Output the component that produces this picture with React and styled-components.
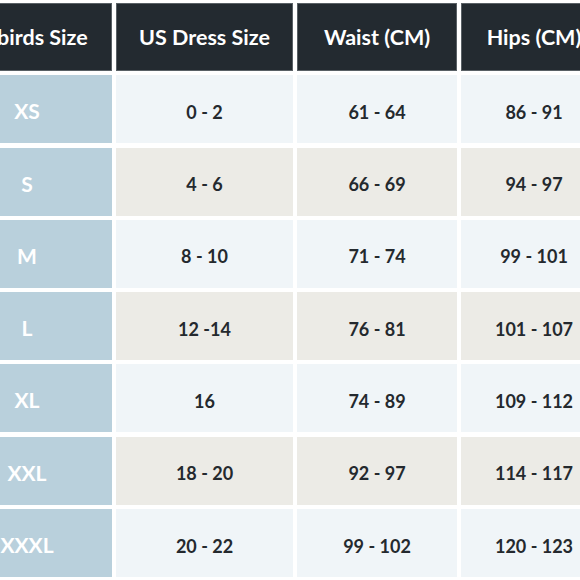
import React from "react";
import styled, { createGlobalStyle } from "styled-components";

const GlobalStyle = createGlobalStyle`
  html, body {
    margin: 0;
    padding: 0;
    background: #ffffff;
    overflow: hidden;
  }
  body {
    font-family: Lato, "Noto Sans", "Liberation Sans", sans-serif;
  }
`;

const HEADERS = ["Jaybirds Size", "US Dress Size", "Waist (CM)", "Hips (CM)"];

const ROWS = [
  ["XS", "0 - 2", "61 - 64", "86 - 91"],
  ["S", "4 - 6", "66 - 69", "94 - 97"],
  ["M", "8 - 10", "71 - 74", "99 - 101"],
  ["L", "12 -14", "76 - 81", "101 - 107"],
  ["XL", "16", "74 - 89", "109 - 112"],
  ["XXL", "18 - 20", "92 - 97", "114 - 117"],
  ["XXXL", "20 - 22", "99 - 102", "120 - 123"],
];

const App = () => {
  return (
    <>
      <GlobalStyle />
      <Viewport>
        <Table>
          {HEADERS.map((h) => (
            <HeadCell key={h}>{h}</HeadCell>
          ))}
          {ROWS.map((row, i) =>
            row.map((value, j) =>
              j === 0 ? (
                <SizeCell key={`${i}-${j}`}>{value}</SizeCell>
              ) : (
                <DataCell key={`${i}-${j}`} $shaded={i % 2 === 1}>
                  {value}
                </DataCell>
              )
            )
          )}
        </Table>
      </Viewport>
    </>
  );
};
export default App;

const Viewport = styled.div`
  width: 580px;
  height: 580px;
  overflow: hidden;
  padding-top: 3px;
  box-sizing: border-box;
`;
const Table = styled.div`
  display: grid;
  grid-template-columns: 170px 177px 160px 146px;
  grid-template-rows: repeat(8, 1fr);
  column-gap: 4px;
  row-gap: 4.3px;
  height: 574px;
  margin-left: -58px;
  width: max-content;
`;
const Cell = styled.div`
  display: flex;
  align-items: center;
  justify-content: center;
  white-space: nowrap;
  font-weight: 700;
`;
const HeadCell = styled(Cell)`
  background-color: #232a30;
  border: 1px solid #596065;
  color: #ffffff;
  font-size: 21.5px;
  padding-top: 1px;
`;
const SizeCell = styled(Cell)`
  background-color: #b9d0dc;
  color: #ffffff;
  font-size: 21px;
  padding-top: 3px;
`;
const DataCell = styled(Cell)`
  background-color: ${({ $shaded }) => ($shaded ? "#ecebe6" : "#f0f5f8")};
  color: #24292e;
  font-size: 18px;
  padding-top: 5px;
`;
